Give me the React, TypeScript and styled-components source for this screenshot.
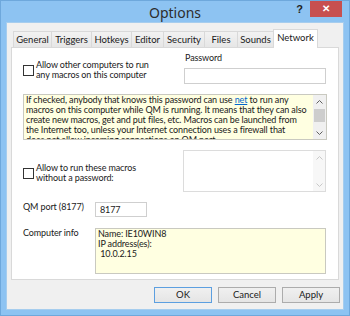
import React from "react";
import styled, { createGlobalStyle, css } from "styled-components";

const Global = createGlobalStyle`
  html, body { margin: 0; padding: 0; }
  body {
    width: 350px; height: 316px; overflow: hidden;
    font-family: Lato, "Noto Sans", sans-serif;
    color: #1a1a1a;
  }
`;

const Window = styled.div`
  width: 350px;
  height: 316px;
  box-sizing: border-box;
  background: #8dc3f2;
  border: 1px solid #6ea8dc;
  display: flex;
  flex-direction: column;
`;

const TitleBar = styled.div`
  height: 22px;
  display: grid;
  grid-template-columns: 1fr auto 1fr;
  align-items: start;
`;

const Title = styled.div`
  font-family: "Noto Sans", sans-serif;
  font-size: 14px;
  line-height: 22px;
  color: #2d2d2d;
  padding-top: 1px;
`;

const TitleButtons = styled.div`
  display: flex;
  justify-content: flex-end;
  align-items: flex-start;
`;

const HelpBtn = styled.div`
  font-family: "Liberation Sans", sans-serif;
  font-weight: bold;
  font-size: 11px;
  line-height: 17px;
  color: #222;
  margin-right: 7px;
`;

const CloseBtn = styled.div`
  width: 32px;
  height: 16px;
  margin-right: 7px;
  background: #c75050;
  color: #fff;
  font-family: "Liberation Sans", sans-serif;
  font-weight: bold;
  font-size: 10px;
  line-height: 16px;
  text-align: center;
`;

const Client = styled.div`
  flex: 1;
  margin: 0 6px 6px 6px;
  background: #f0f0f0;
  box-shadow: 0 0 0 1px #a6cdee;
  padding: 6px 4px 0 4px;
  display: flex;
  flex-direction: column;
`;

const TabRow = styled.div`
  display: flex;
  align-items: flex-end;
  height: 18px;
  padding-left: 2px;
  position: relative;
  z-index: 1;
`;

const Tab = styled.div<{ $w: number; $active?: boolean }>`
  width: ${(p) => p.$w}px;
  box-sizing: border-box;
  height: 16px;
  margin-left: -1px;
  border: 1px solid #d9d9d9;
  border-bottom: none;
  background: linear-gradient(#f2f2f2, #e6e6e6);
  font-size: 9.5px;
  line-height: 15px;
  text-align: center;
  white-space: nowrap;
  &:first-child { margin-left: 0; }
  ${(p) =>
    p.$active &&
    css`
      height: 19px;
      margin-bottom: -1px;
      background: #fff;
      line-height: 15px;
    `}
`;

const Pane = styled.div`
  height: 233px;
  box-sizing: border-box;
  background: #fff;
  border: 1px solid #d9d9d9;
  padding: 5px 12px 0 11px;
  display: flex;
  flex-direction: column;
  font-size: 9px;
  line-height: 10px;
  letter-spacing: -0.12px;
`;

const Row = styled.div<{ $mt?: number }>`
  display: flex;
  justify-content: space-between;
  align-items: flex-start;
  margin-top: ${(p) => p.$mt ?? 0}px;
`;

const CheckGroup = styled.label<{ $mt: number }>`
  display: flex;
  align-items: center;
  gap: 2px;
  margin-top: ${(p) => p.$mt}px;
`;

const Box = styled.span`
  width: 11px;
  height: 11px;
  box-sizing: border-box;
  border: 1px solid #333;
  background: #fff;
  flex: none;
`;

const CheckText = styled.span`
  white-space: nowrap;
`;

const RightCol = styled.div`
  width: 142px;
  display: flex;
  flex-direction: column;
`;

const FieldLabel = styled.div`
  padding-left: 1px;
`;

const Input = styled.div<{ $w?: number; $h: number; $mt?: number }>`
  width: ${(p) => (p.$w ? `${p.$w}px` : "auto")};
  height: ${(p) => p.$h}px;
  margin-top: ${(p) => p.$mt ?? 0}px;
  box-sizing: border-box;
  border: 1px solid #cfcfcf;
  background: #fff;
  padding: 2px 0 0 4px;
  font-size: 9px;
  line-height: 10px;
`;

const InfoBox = styled.div<{ $w: number; $mt?: number }>`
  width: ${(p) => p.$w}px;
  height: 46px;
  margin-top: ${(p) => p.$mt ?? 0}px;
  box-sizing: border-box;
  border: 1px solid #c9c9c0;
  background: #ffffe1;
  display: flex;
  overflow: hidden;
`;

const InfoText = styled.div`
  flex: 1;
  padding: 0 0 0 2px;
  white-space: nowrap;
  overflow: hidden;
  font-size: 9px;
  line-height: 10px;
`;

const Link = styled.a`
  color: #0066cc;
  text-decoration: underline;
`;

const ScrollBar = styled.div`
  width: 13px;
  flex: none;
  background: #f0f0f0;
  display: flex;
  flex-direction: column;
  align-items: center;
`;

const Arrow = styled.div`
  height: 13px;
  width: 13px;
  display: flex;
  align-items: center;
  justify-content: center;
`;

const Track = styled.div`
  flex: 1;
  width: 13px;
  display: flex;
  flex-direction: column;
`;

const Thumb = styled.div`
  height: 13px;
  margin: 1px 1px 0 1px;
  background: #cdcdcd;
`;

const ListBox = styled.div`
  width: 143px;
  height: 42px;
  box-sizing: border-box;
  border: 1px solid #dcdcdc;
  background: #fff;
  display: flex;
  justify-content: flex-end;
`;

const ListScroll = styled.div`
  width: 12px;
  background: #f7f7f7;
  display: flex;
  flex-direction: column;
  justify-content: space-between;
`;

const LeftLabel = styled.div`
  width: 72px;
  flex: none;
`;

const FormRow = styled.div<{ $mt: number }>`
  display: flex;
  align-items: flex-start;
  margin-top: ${(p) => p.$mt}px;
`;

const ButtonRow = styled.div`
  display: flex;
  justify-content: flex-end;
  gap: 6px;
  padding: 7px 0 0 0;
  margin-right: -1px;
`;

const Button = styled.div<{ $default?: boolean }>`
  width: 58px;
  height: 16px;
  box-sizing: border-box;
  border: 1px solid ${(p) => (p.$default ? "#5c9fe0" : "#acacac")};
  background: linear-gradient(#f0f0f0, #e5e5e5);
  font-size: 9.5px;
  line-height: 14px;
  text-align: center;
`;

const Chevron = ({ up, color }: { up?: boolean; color: string }) => (
  <svg width="7" height="4" viewBox="0 0 7 4">
    <path
      d={up ? "M0.5 3.5 L3.5 0.5 L6.5 3.5" : "M0.5 0.5 L3.5 3.5 L6.5 0.5"}
      fill="none"
      stroke={color}
      strokeWidth="1"
    />
  </svg>
);

const tabs: [string, number][] = [
  ["General", 39],
  ["Triggers", 41],
  ["Hotkeys", 41],
  ["Editor", 33],
  ["Security", 42],
  ["Files", 34],
  ["Sounds", 37],
];

export default function App() {
  return (
    <>
      <Global />
      <Window>
        <TitleBar>
          <div />
          <Title>Options</Title>
          <TitleButtons>
            <HelpBtn>?</HelpBtn>
            <CloseBtn>✕</CloseBtn>
          </TitleButtons>
        </TitleBar>
        <Client>
          <TabRow>
            {tabs.map(([t, w]) => (
              <Tab key={t} $w={w}>
                {t}
              </Tab>
            ))}
            <Tab $w={45} $active>
              Network
            </Tab>
          </TabRow>
          <Pane>
            <Row>
              <CheckGroup $mt={7}>
                <Box />
                <CheckText>
                  Allow other computers to run
                  <br />
                  any macros on this computer
                </CheckText>
              </CheckGroup>
              <RightCol>
                <FieldLabel>Password</FieldLabel>
                <Input $h={16} $mt={5} />
              </RightCol>
            </Row>
            <InfoBox $w={304} $mt={10}>
              <InfoText>
                If checked, anybody that knows this password can use <Link>net</Link> to run any
                <br />
                macros on this computer while QM is running. It means that they can also
                <br />
                create new macros, get and put files, etc. Macros can be launched from
                <br />
                the Internet too, unless your Internet connection uses a firewall that
                <br />
                does not allow incoming connections on QM port.
              </InfoText>
              <ScrollBar>
                <Arrow>
                  <Chevron up color="#606060" />
                </Arrow>
                <Track>
                  <Thumb />
                </Track>
                <Arrow>
                  <Chevron color="#606060" />
                </Arrow>
              </ScrollBar>
            </InfoBox>
            <Row $mt={10}>
              <CheckGroup $mt={13}>
                <Box />
                <CheckText>
                  Allow to run these macros
                  <br />
                  without a password:
                </CheckText>
              </CheckGroup>
              <ListBox>
                <ListScroll>
                  <Arrow>
                    <Chevron up color="#c8c8c8" />
                  </Arrow>
                  <Arrow>
                    <Chevron color="#c8c8c8" />
                  </Arrow>
                </ListScroll>
              </ListBox>
            </Row>
            <FormRow $mt={10}>
              <LeftLabel>QM port (8177)</LeftLabel>
              <Input $w={52} $h={15}>
                8177
              </Input>
            </FormRow>
            <FormRow $mt={11}>
              <LeftLabel>Computer info</LeftLabel>
              <InfoBox $w={232}>
                <InfoText>
                  Name: IE10WIN8
                  <br />
                  IP address(es):
                  <br />
                  &nbsp;10.0.2.15
                </InfoText>
              </InfoBox>
            </FormRow>
          </Pane>
          <ButtonRow>
            <Button $default>OK</Button>
            <Button>Cancel</Button>
            <Button>Apply</Button>
          </ButtonRow>
        </Client>
      </Window>
    </>
  );
}
